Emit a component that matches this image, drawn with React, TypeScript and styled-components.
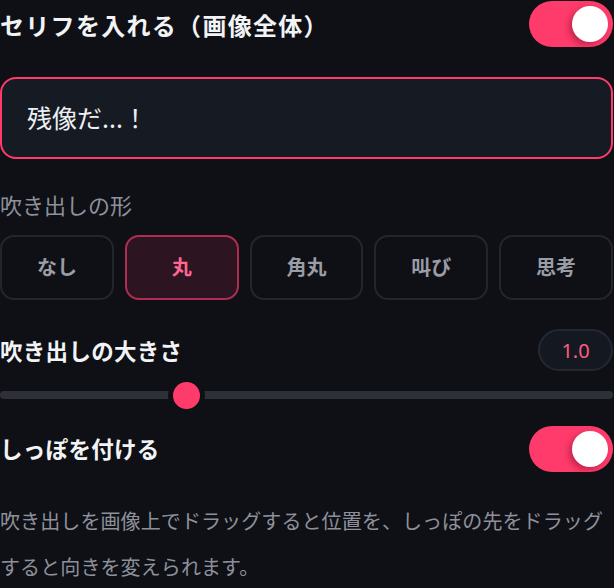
import React, { useState } from "react";
import styled, { createGlobalStyle } from "styled-components";

const PINK = "#ff3b6b";
const BG = "#0e1016";

const Global = createGlobalStyle`
  html, body { margin: 0; padding: 0; background: ${BG}; }
  body { font-family: "Noto Sans CJK JP", "Noto Sans", sans-serif; overflow: hidden; }
  * { box-sizing: border-box; }
`;

const Panel = styled.div`
  width: 613px;
  min-height: 588px;
  display: flex;
  flex-direction: column;
  background: ${BG};
  color: #f2f3f5;
  & > * { flex-shrink: 0; }
`;

const Row = styled.div<{ $h: number; $mt?: number }>`
  display: flex;
  align-items: center;
  justify-content: space-between;
  height: ${(p) => p.$h}px;
  margin-top: ${(p) => p.$mt ?? 0}px;
`;

const Title = styled.div<{ $size: number; $ls?: number; $dy?: number }>`
  font-size: ${(p) => p.$size}px;
  font-weight: 700;
  color: #f2f3f5;
  line-height: 1;
  letter-spacing: ${(p) => p.$ls ?? 0.3}px;
  padding-top: ${(p) => p.$dy ?? 0}px;
`;

const ToggleTrack = styled.button<{ $on: boolean }>`
  width: 84px;
  height: 46px;
  border-radius: 23px;
  border: none;
  padding: 0;
  background: ${(p) => (p.$on ? PINK : "#2e3038")};
  position: relative;
  cursor: pointer;
`;

const Knob = styled.span<{ $on: boolean }>`
  position: absolute;
  top: 5px;
  left: ${(p) => (p.$on ? 43 : 5)}px;
  width: 36px;
  height: 36px;
  border-radius: 50%;
  background: #fff;
  box-shadow: -3px 3px 6px rgba(120, 10, 40, 0.45);
`;

const TextBox = styled.input`
  margin-top: 29px;
  height: 82px;
  width: 100%;
  border: 2px solid ${PINK};
  border-radius: 16px;
  background: #161a23;
  color: #eceef2;
  font-family: "Noto Sans CJK JP", "Noto Sans", sans-serif;
  font-size: 25px;
  padding: 0 0 2px 25px;
  outline: none;
`;

const Label = styled.div`
  margin-top: 31px;
  font-size: 22px;
  color: #8e919b;
  line-height: 28px;
`;

const ShapeRow = styled.div`
  margin-top: 17px;
  display: grid;
  grid-template-columns: repeat(5, 1fr);
  gap: 11px;
  height: 65px;
`;

const ShapeBtn = styled.button<{ $active: boolean }>`
  border-radius: 14px;
  border: 2px solid ${(p) => (p.$active ? "#b02c50" : "#24262d")};
  background: ${(p) => (p.$active ? "#2d1421" : "transparent")};
  color: ${(p) => (p.$active ? "#ff6690" : "#9a9ca6")};
  font-family: "Noto Sans CJK JP", "Noto Sans", sans-serif;
  font-size: 20px;
  font-weight: 700;
  cursor: pointer;
  padding: 0 0 2px;
`;

const ValuePill = styled.div`
  width: 75px;
  height: 42px;
  border-radius: 21px;
  background: #141820;
  border: 2px solid #252830;
  color: #ff5a84;
  font-size: 20px;
  display: flex;
  align-items: center;
  justify-content: center;
  font-family: "Noto Sans", sans-serif;
`;

const SliderWrap = styled.div`
  position: relative;
  height: 34px;
  margin-top: 7px;
  display: flex;
  align-items: center;
`;

const Track = styled.div`
  width: 100%;
  height: 8px;
  border-radius: 4px;
  background: #2e3038;
`;

const Thumb = styled.div`
  position: absolute;
  top: 50%;
  width: 27px;
  height: 27px;
  margin: -13.5px 0 0 -13.5px;
  border-radius: 50%;
  background: ${PINK};
  box-shadow: 0 0 0 5px ${BG};
`;

const Desc = styled.p`
  margin: 26px 0 0;
  font-size: 20px;
  line-height: 46px;
  color: #8e919b;
  letter-spacing: 0.1px;
`;

const shapes = ["なし", "丸", "角丸", "叫び", "思考"];

export default function App() {
  const [on1, setOn1] = useState(true);
  const [on2, setOn2] = useState(true);
  const [shape, setShape] = useState(1);
  const value = 1.0;
  const pct = 30.5;
  return (
    <>
      <Global />
      <Panel>
        <Row $h={48}>
          <Title $size={24} $ls={1.3} $dy={2}>
            セリフを入れる（画像全体）
          </Title>
          <ToggleTrack $on={on1} onClick={() => setOn1(!on1)}>
            <Knob $on={on1} />
          </ToggleTrack>
        </Row>
        <TextBox defaultValue="残像だ...！" />
        <Label>吹き出しの形</Label>
        <ShapeRow>
          {shapes.map((s, i) => (
            <ShapeBtn key={s} $active={shape === i} onClick={() => setShape(i)}>
              {s}
            </ShapeBtn>
          ))}
        </ShapeRow>
        <Row $h={42} $mt={29}>
          <Title $size={22.5}>吹き出しの大きさ</Title>
          <ValuePill>{value.toFixed(1)}</ValuePill>
        </Row>
        <SliderWrap>
          <Track />
          <Thumb style={{ left: `${pct}%` }} />
        </SliderWrap>
        <Row $h={47} $mt={13}>
          <Title $size={22.5}>しっぽを付ける</Title>
          <ToggleTrack $on={on2} onClick={() => setOn2(!on2)}>
            <Knob $on={on2} />
          </ToggleTrack>
        </Row>
        <Desc>
          吹き出しを画像上でドラッグすると位置を、しっぽの先をドラッグすると向きを変えられます。
        </Desc>
      </Panel>
    </>
  );
}
